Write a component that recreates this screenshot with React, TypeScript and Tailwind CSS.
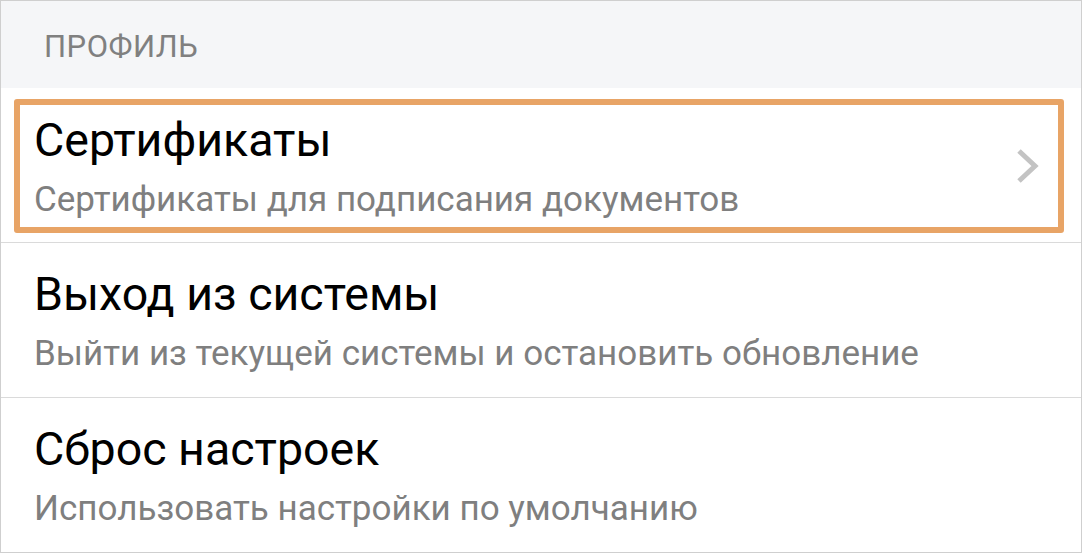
const rows = [
  { title: "Сертификаты", sub: "Сертификаты для подписания документов", selected: true },
  { title: "Выход из системы", sub: "Выйти из текущей системы и остановить обновление" },
  { title: "Сброс настроек", sub: "Использовать настройки по умолчанию" },
];

function Chevron() {
  return (
    <svg width="24" height="36" viewBox="0 0 24 36" fill="none">
      <path d="M3 3 L19 18 L3 33" stroke="#c3c3c3" strokeWidth="5" />
    </svg>
  );
}

export default function App() {
  return (
    <div
      className="w-[1082px] h-[553px] border border-[#cfcfcf] bg-white flex flex-col overflow-hidden"
      style={{ fontFamily: "Roboto, 'Noto Sans', sans-serif" }}
    >
      <div className="h-[87px] bg-[#f5f6f8] pl-[43px] pt-[6px] flex items-center shrink-0">
        <span className="text-[31px] tracking-[0.5px] text-[#808080]">ПРОФИЛЬ</span>
      </div>
      {rows.map((r, i) => (
        <div
          key={i}
          className={`h-[155px] shrink-0 flex ${i < rows.length - 1 ? "border-b border-[#dadada]" : ""} ${r.selected ? "pl-[13px] pr-[17px] pt-[11px] pb-[9px]" : "pl-[33px] pr-[40px]"}`}
        >
          <div
            className={`flex-1 flex items-center ${r.selected ? "border-[6px] border-[#e8a466] rounded-[3px] pl-[14px] pr-[18px]" : ""}`}
          >
            <div className="flex-1 flex flex-col gap-[9px] pt-[2px]">
              <span className="text-[46.5px] leading-[56px] text-black">{r.title}</span>
              <span className="text-[35px] leading-[46px] text-[#7f7f7f]">{r.sub}</span>
            </div>
            {r.selected && <Chevron />}
          </div>
        </div>
      ))}
    </div>
  );
}
